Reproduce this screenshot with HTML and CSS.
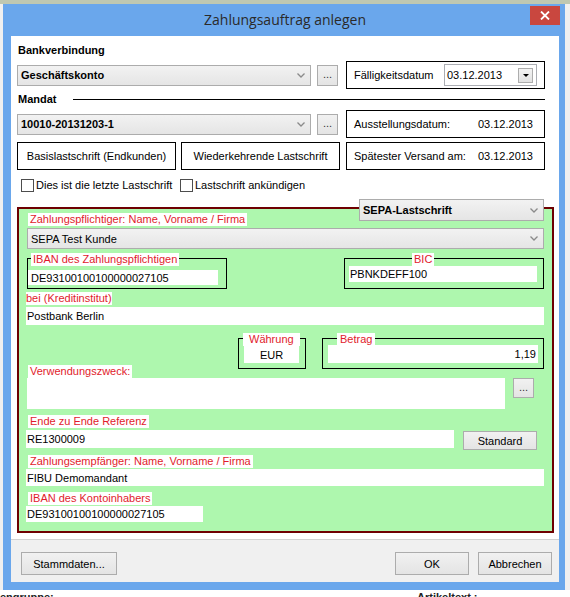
FILE: index.html
```html
<!DOCTYPE html>
<html lang="de">
<head>
<meta charset="utf-8">
<title>Zahlungsauftrag anlegen</title>
<link rel="stylesheet" href="styles.css">
</head>
<body>
<div class="topstrip"></div>
<div class="desk">
  <div class="window">
    <div class="titlebar">
      <span class="title">Zahlungsauftrag anlegen</span>
      <span class="close"><svg width="10" height="9" viewBox="0 0 10 9"><path d="M1 0.5 L9 8.5 M9 0.5 L1 8.5" stroke="#fff" stroke-width="1.8" fill="none"/></svg></span>
    </div>
    <div class="client">
      <div class="main">
        <div class="sec-title">Bankverbindung</div>
        <div class="row">
          <div class="combo combo-main"><span>Geschäftskonto</span><svg class="chev" width="8" height="5" viewBox="0 0 8 5"><path d="M0.5 0.5 L4 4 L7.5 0.5" stroke="#8a8a8a" stroke-width="1.3" fill="none"/></svg></div>
          <div class="btn dots">...</div>
          <div class="box date-box date-box-pick">
            <span class="pick-label">Fälligkeitsdatum</span>
            <div class="datepicker"><span>03.12.2013</span><span class="dd"><span class="tri"></span></span></div>
          </div>
        </div>
        <div class="sec-title mandat"><span>Mandat</span><span class="rule"></span></div>
        <div class="row row2">
          <div class="combo combo-main"><span>10010-20131203-1</span><svg class="chev" width="8" height="5" viewBox="0 0 8 5"><path d="M0.5 0.5 L4 4 L7.5 0.5" stroke="#8a8a8a" stroke-width="1.3" fill="none"/></svg></div>
          <div class="btn dots">...</div>
          <div class="box date-box"><span>Ausstellungsdatum:</span><span>03.12.2013</span></div>
        </div>
        <div class="row row3">
          <div class="box type-box">Basislastschrift (Endkunden)</div>
          <div class="box type-box type-box2">Wiederkehrende Lastschrift</div>
          <div class="box date-box date-box3"><span>Spätester Versand am:</span><span>03.12.2013</span></div>
        </div>
        <div class="checks">
          <label class="check check1"><span class="cb"></span><span>Dies ist die letzte Lastschrift</span></label>
          <label class="check"><span class="cb"></span><span>Lastschrift ankündigen</span></label>
        </div>
        <div class="panel">
          <div class="combo sepa-type"><span>SEPA-Lastschrift</span><svg class="chev" width="8" height="5" viewBox="0 0 8 5"><path d="M0.5 0.5 L4 4 L7.5 0.5" stroke="#8a8a8a" stroke-width="1.3" fill="none"/></svg></div>
          <div class="lbl lbl-payer">Zahlungspflichtiger: Name, Vorname / Firma</div>
          <div class="combo combo-payer"><span>SEPA Test Kunde</span><svg class="chev" width="8" height="5" viewBox="0 0 8 5"><path d="M0.5 0.5 L4 4 L7.5 0.5" stroke="#8a8a8a" stroke-width="1.3" fill="none"/></svg></div>
          <div class="grp-row">
            <div class="grp grp-iban">
              <span class="legend legend-iban">IBAN des Zahlungspflichtigen</span>
              <div class="field field-iban">DE93100100100000027105</div>
            </div>
            <div class="grp grp-bic">
              <span class="legend legend-bic">BIC</span>
              <div class="field field-bic">PBNKDEFF100</div>
            </div>
          </div>
          <div class="lbl lbl-bank">bei (Kreditinstitut)</div>
          <div class="field field-wide field-bank">Postbank Berlin</div>
          <div class="grp-row grp-row2">
            <div class="grp grp-cur">
              <span class="legend legend-cur">Währung</span>
              <div class="field field-cur">EUR</div>
            </div>
            <div class="grp grp-amt">
              <span class="legend legend-amt">Betrag</span>
              <div class="field field-amt">1,19</div>
            </div>
          </div>
          <div class="lbl lbl-purpose">Verwendungszweck:</div>
          <div class="purpose-row">
            <div class="field textarea"></div>
            <div class="btn dots dots-small">...</div>
          </div>
          <div class="lbl lbl-ref">Ende zu Ende Referenz</div>
          <div class="ref-row">
            <div class="field field-ref">RE1300009</div>
            <div class="btn btn-standard">Standard</div>
          </div>
          <div class="lbl lbl-recv">Zahlungsempfänger: Name, Vorname / Firma</div>
          <div class="field field-wide field-recv">FIBU Demomandant</div>
          <div class="lbl lbl-iban2">IBAN des Kontoinhabers</div>
          <div class="field field-iban2">DE93100100100000027105</div>
        </div>
      </div>
      <div class="footer">
        <div class="btn btn-foot btn-stamm">Stammdaten...</div>
        <div class="spacer"></div>
        <div class="btn btn-foot">OK</div>
        <div class="btn btn-foot btn-cancel">Abbrechen</div>
      </div>
    </div>
  </div>
</div>
<div class="below">
  <span class="below-left">engruppe:</span>
  <span class="below-right">Artikeltext :</span>
</div>
</body>
</html>
```

FILE: styles.css
```css
* { box-sizing: border-box; }
html, body { margin: 0; padding: 0; }
body {
  width: 570px;
  height: 597px;
  overflow: hidden;
  background: #ffffff;
  font-family: "Liberation Sans", Arial, sans-serif;
  font-size: 11px;
  color: #000;
}
.topstrip { height: 4px; background: #bfc8b2; }
.desk { display: flex; background: #f0f0f0; padding-left: 3px; }
.window {
  width: 562px;
  background: #6aa7ec;
  display: flex;
  flex-direction: column;
  padding: 0 6px 8px 8px;
}
.titlebar {
  height: 32px;
  position: relative;
  display: flex;
  align-items: center;
  justify-content: center;
}
.title {
  font-family: "Open Sans", "Noto Sans", sans-serif;
  font-size: 14px;
  color: #2a2a2a;
  margin-top: -2px;
}
.close {
  position: absolute;
  top: 2px;
  right: -1px;
  width: 30px;
  height: 19px;
  background: #c9473f;
  display: flex;
  align-items: center;
  justify-content: center;
}
.client {
  background: #fff;
  height: 546px;
  display: flex;
  flex-direction: column;
}
.main { height: 503px; padding-left: 6px; }
.sec-title {
  font-weight: bold;
  line-height: 14px;
  height: 14px;
  margin-top: 7px;
  padding-left: 1px;
}
.mandat {
  display: flex;
  align-items: center;
  width: 528px;
  margin-top: 3px;
}
.rule { flex: 1; height: 1px; background: #000; margin-left: 16px; }
.row {
  display: flex;
  align-items: center;
  height: 28px;
  margin-top: 4px;
  width: 528px;
}
.combo {
  height: 21px;
  border: 1px solid #acacac;
  background: linear-gradient(#f2f2f2, #e5e5e5);
  display: flex;
  align-items: center;
  justify-content: space-between;
  padding: 0 5px 0 3px;
}
.combo-main { width: 294px; font-weight: bold; }
.btn {
  border: 1px solid #acacac;
  background: linear-gradient(#f1f1f1, #e4e4e4);
  display: flex;
  align-items: center;
  justify-content: center;
}
.dots { width: 21px; height: 21px; margin-left: 6px; color: #333; padding-bottom: 3px; }
.box {
  border: 1px solid #000;
  height: 28px;
  display: flex;
  align-items: center;
}
.date-box {
  width: 199px;
  margin-left: 8px;
  padding: 0 11px 0 7px;
  justify-content: space-between;
}
.date-box-pick { padding-right: 7px; }
.datepicker {
  width: 93px;
  height: 22px;
  border: 1px solid #abadb3;
  background: #fff;
  display: flex;
  align-items: center;
  justify-content: space-between;
  padding: 0 3px 0 2px;
}
.dd {
  width: 15px;
  height: 15px;
  border: 1px solid #adadad;
  background: linear-gradient(#f3f3f3, #e2e2e2);
  display: flex;
  align-items: center;
  justify-content: center;
}
.tri {
  width: 0;
  height: 0;
  border-left: 3px solid transparent;
  border-right: 3px solid transparent;
  border-top: 3px solid #000;
}
.type-box { width: 159px; justify-content: center; }
.type-box2 { margin-left: 5px; }
.date-box3 { margin-left: 6px; }
.checks {
  display: flex;
  height: 13px;
  margin-top: 9px;
  padding-left: 4px;
  line-height: 13px;
}
.check { display: flex; align-items: center; gap: 2px; }
.check1 { width: 159px; }
.cb { width: 13px; height: 13px; border: 1px solid #4d4d4d; background: #fff; }

.panel {
  position: relative;
  width: 537px;
  height: 326px;
  margin-top: 15px;
  border: 2px solid #6e0000;
  background: #aef7ae;
}
.sepa-type {
  position: absolute;
  left: 340px;
  top: -10px;
  width: 185px;
  height: 22px;
  font-weight: bold;
}
.lbl {
  width: max-content;
  background: #fff;
  color: #e11b2b;
  line-height: 13px;
  height: 13px;
  padding: 0 2px;
  margin-left: 9px;
}
.lbl-payer { margin-top: 4px; }
.combo-payer { width: 517px; margin: 2px 0 0 8px; }
.grp-row { display: flex; margin-top: 9px; }
.grp { position: relative; border: 1px solid #000; height: 31px; }
.legend {
  position: absolute;
  top: -6px;
  background: #fff;
  color: #e11b2b;
  line-height: 13px;
  padding: 0 2px;
}
.field {
  background: #fff;
  display: flex;
  align-items: center;
  padding-left: 1px;
  white-space: nowrap;
}
.grp-iban { width: 200px; margin-left: 8px; }
.legend-iban { left: 3px; }
.field-iban { width: 190px; height: 15px; margin-top: 11px; padding-left: 3px; }
.grp-bic { width: 200px; margin-left: 117px; }
.legend-bic { left: 67px; }
.field-bic { width: 188px; height: 16px; margin: 7px 0 0 4px; }
.lbl-bank { margin: 3px 0 0 7px; padding: 0; }
.field-wide { width: 518px; margin-left: 7px; }
.field-bank { height: 18px; margin-top: 2px; }
.grp-row2 { margin-top: 13px; }
.grp-cur { width: 68px; margin-left: 219px; }
.legend-cur { left: 4px; padding: 0 6px; }
.field-cur { width: 55px; height: 17px; margin: 7px 0 0 5px; justify-content: center; padding-left: 0; }
.grp-amt { width: 222px; margin-left: 16px; }
.legend-amt { left: 14px; padding: 0 3px; }
.field-amt { width: 210px; height: 18px; margin: 6px 0 0 5px; justify-content: flex-end; padding-right: 2px; }
.lbl-purpose { margin-top: -4px; }
.purpose-row { display: flex; align-items: flex-start; }
.textarea { width: 478px; height: 31px; margin-left: 8px; }
.dots-small { width: 21px; height: 20px; margin-left: 8px; }
.lbl-ref { margin-top: 6px; }
.ref-row { display: flex; align-items: flex-start; margin-top: 2px; }
.field-ref { width: 428px; height: 18px; margin-left: 7px; }
.btn-standard { width: 74px; height: 19px; margin: 1px 0 0 9px; }
.lbl-recv { margin-top: 5px; }
.field-recv { height: 17px; margin-top: 1px; }
.lbl-iban2 { margin-top: 6px; }
.field-iban2 { width: 177px; height: 16px; margin: 1px 0 0 7px; }

.footer {
  flex: 1;
  border-top: 1px solid #d2d2d2;
  background: #f0f0f0;
  display: flex;
  align-items: flex-start;
  padding: 12px 7px 0 10px;
}
.btn-foot { width: 74px; height: 23px; }
.btn-stamm { width: 96px; }
.spacer { flex: 1; }
.btn-cancel { margin-left: 9px; }
.below {
  display: flex;
  line-height: 13px;
  font-weight: bold;
  color: #222;
  padding-top: 1px;
}
.below-left { width: 417px; }
```
